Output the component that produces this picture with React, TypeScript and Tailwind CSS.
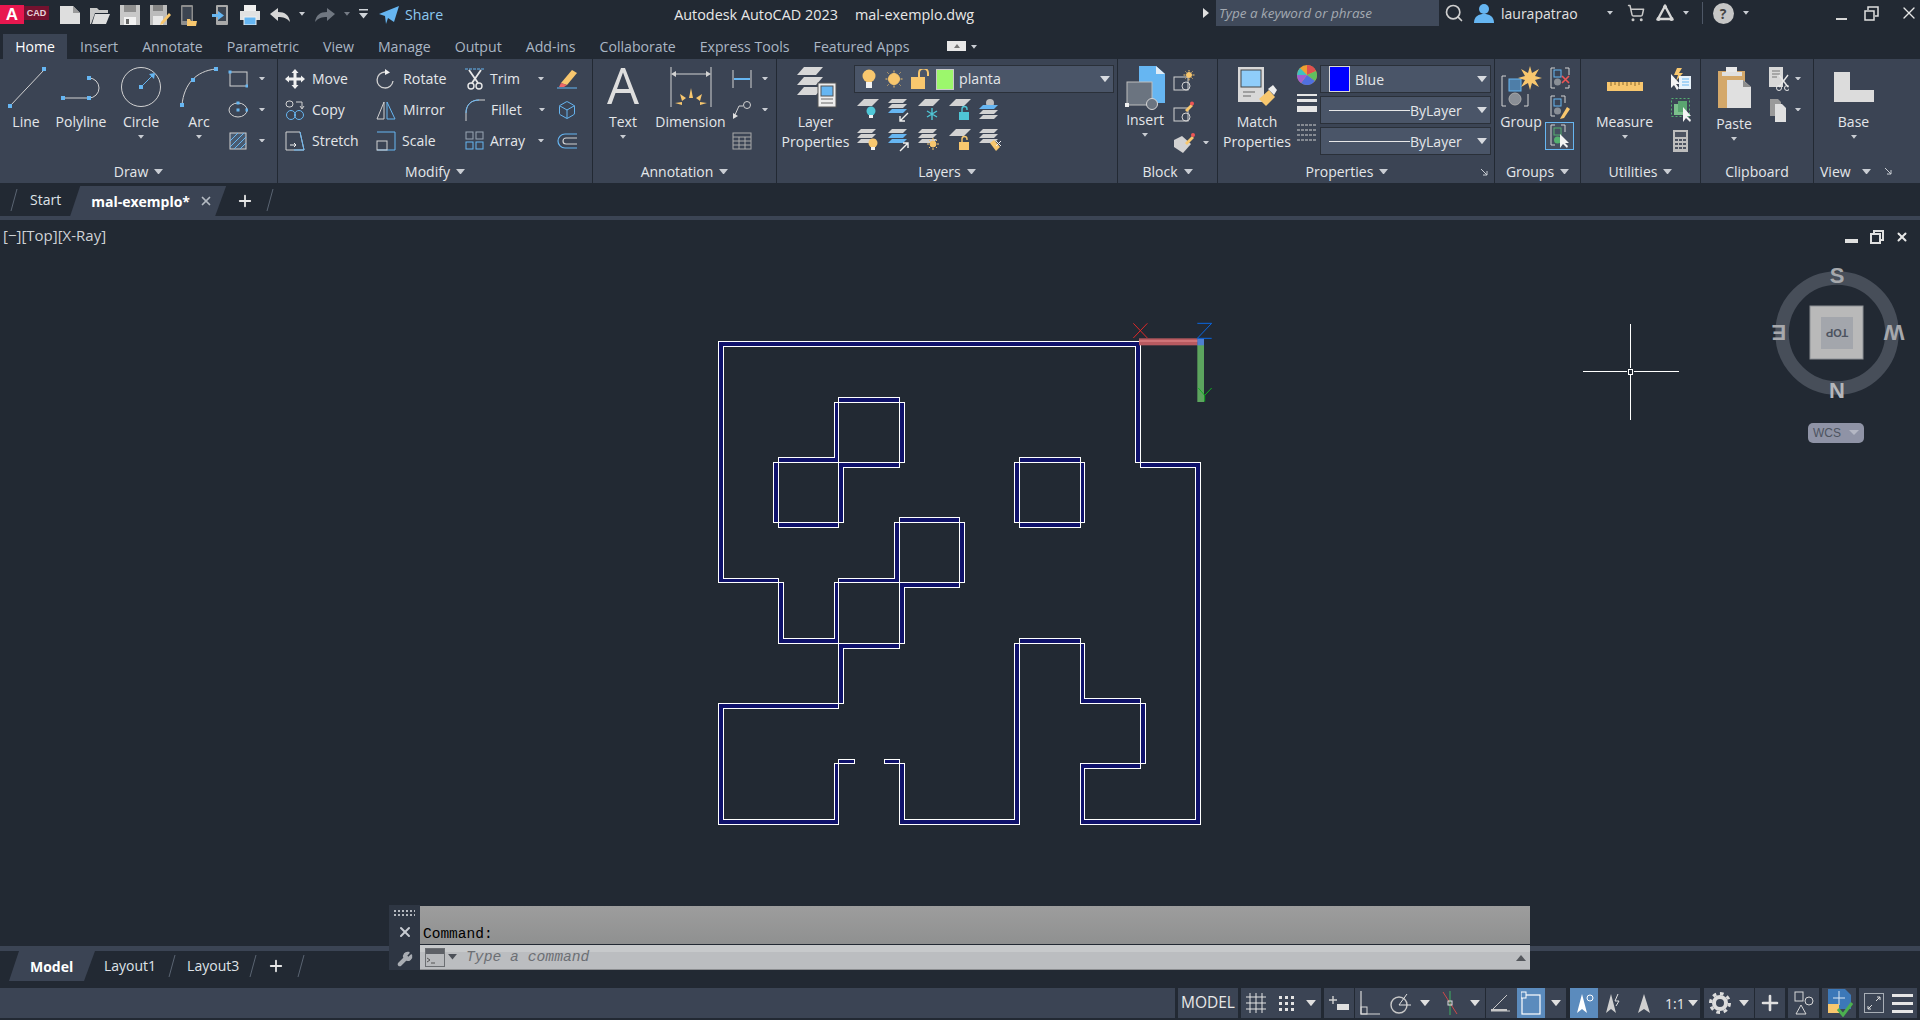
import type { ReactNode } from 'react';
import { Box, ShoppingCart, Search, Wrench, X, Plus } from 'lucide-react';

const G = '#d2d2d2';
const B = '#66b6f2';
const Y = '#f8c76e';

function Svg({ w, h, children, className = '' }: { w: number; h: number; children?: ReactNode; className?: string }) {
  return (
    <svg width={w} height={h} viewBox={`0 0 ${w} ${h}`} fill="none" className={`block shrink-0 ${className}`}>
      {children}
    </svg>
  );
}

function Caret({ className = '', size = 8, color = '#c9cdd3' }: { className?: string; size?: number; color?: string }) {
  return (
    <svg width={size} height={size * 0.62} viewBox="0 0 8 5" className={`block shrink-0 ${className}`}>
      <path d="M0 0H8L4 5Z" fill={color} />
    </svg>
  );
}

const Dot = ({ x, y, s = 4 }: { x: number; y: number; s?: number }) => (
  <rect x={x - s / 2} y={y - s / 2} width={s} height={s} fill={B} />
);

// sheet of a layer stack
const Sheet = ({ y, fill = G, h = 4 }: { y: number; fill?: string; h?: number }) => (
  <path d={`M${h} ${y}H${h + 15}L${15} ${y + h}H0Z`} fill={fill} />
);

const Bulb = ({ x, y, c = Y }: { x: number; y: number; c?: string }) => (
  <g>
    <circle cx={x} cy={y} r={4.5} fill={c} />
    <rect x={x - 2} y={y + 4} width={4} height={3} fill="#f2f2f2" />
  </g>
);

const Lock = ({ x, y, c = Y }: { x: number; y: number; c?: string }) => (
  <g>
    <rect x={x} y={y + 5} width={10} height={8} fill={c} />
    <path d={`M${x + 3} ${y + 5}V${y + 2}a2.5 2.5 0 0 1 5 0V${y + 3}`} stroke={c} strokeWidth={1.4} />
  </g>
);

const Sun = ({ x, y, r = 4 }: { x: number; y: number; r?: number }) => (
  <g stroke={Y} strokeWidth={1}>
    <circle cx={x} cy={y} r={r} fill={Y} />
    <path d={`M${x} ${y - r - 3}v2M${x} ${y + r + 1}v2M${x - r - 3} ${y}h2M${x + r + 1} ${y}h2M${x - r - 1} ${y - r - 1}l1 1M${x + r + 1} ${y - r - 1}l-1 1M${x - r - 1} ${y + r + 1}l1 -1M${x + r + 1} ${y + r + 1}l-1 -1`} />
  </g>
);

function BigTool({ w, icon, lines, caret, className = '', iconH = 46 }: { w: number; icon: ReactNode; lines: string[]; caret?: boolean; className?: string; iconH?: number }) {
  return (
    <div className={`flex flex-col items-center pt-[7px] shrink-0 ${className}`} style={{ width: w }}>
      <div className="flex justify-center" style={{ height: iconH }}>{icon}</div>
      {lines.map((l) => (
        <div key={l} className="leading-[20px] whitespace-nowrap">{l}</div>
      ))}
      {caret && <Caret size={6} className="mt-[3px]" />}
    </div>
  );
}

function Row({ children, className = '' }: { children?: ReactNode; className?: string }) {
  return <div className={`h-[31px] flex items-center ${className}`}>{children}</div>;
}

function Col({ children, className = '' }: { children?: ReactNode; className?: string }) {
  return <div className={`pt-[4px] shrink-0 ${className}`}>{children}</div>;
}

function Panel({ w, label, caret = true, launcher, labelClass = '', children }: { w: number; label: string; caret?: boolean; launcher?: boolean; labelClass?: string; children?: ReactNode }) {
  return (
    <div className="relative flex flex-col shrink-0 h-full border-r border-[#222933]" style={{ width: w }}>
      <div className="flex h-[101px]">{children}</div>
      <div className={`flex h-[23px] items-center justify-center gap-[6px] ${labelClass}`}>
        <span>{label}</span>
        {caret && <Caret size={9} />}
      </div>
      {launcher && (
        <svg width="7" height="7" viewBox="0 0 7 7" className="absolute right-[6px] bottom-[7px]">
          <path d="M0 0L6 6M6 2V6H2" stroke="#c9cdd3" strokeWidth="1" fill="none" />
        </svg>
      )}
    </div>
  );
}

function Dropdown({ w, children }: { w: number; children?: ReactNode }) {
  return (
    <div className="h-[28px] bg-[#4a5568] border border-[#2a3039] flex items-center relative" style={{ width: w }}>
      {children}
      <Caret size={10} color="#d8dbe0" className="absolute right-[3px] top-[10px]" />
    </div>
  );
}

function Slash({ className = '' }: { className?: string }) {
  return (
    <svg width="8" height="24" viewBox="0 0 8 24" className={`block shrink-0 ${className}`}>
      <path d="M7 1L1 23" stroke="#5a6472" strokeWidth="1" />
    </svg>
  );
}

function TitleBar() {
  return (
    <div className="h-[34px] flex items-center shrink-0 relative">
      <div className="flex items-start h-[20px] w-[49px] self-start mt-[5px]">
        <div className="w-[24px] h-[19px] bg-[#e8174f] text-white font-bold text-[17px] leading-[19px] text-center font-['Liberation_Sans']">A</div>
        <div className="w-[25px] h-[14px] mt-[1px] bg-[#74122f] text-[#e8d5da] font-bold text-[9px] leading-[14px] text-center font-['Liberation_Sans']">CAD</div>
      </div>
      <Svg w={20} h={18} className="ml-[11px] -mt-[5px]"><path d="M0 0H13L20 7V18H0Z" fill="#dedede" /><path d="M13 0V7H20" fill="#9a9a9a" /></Svg>
      <Svg w={20} h={18} className="ml-[10px] -mt-[5px]"><path d="M0 2H7L9 4H18V7H5L1 18H0Z" fill="#c9c9c9" /><path d="M5 8H20L16 18H2Z" fill="#dedede" /></Svg>
      <Svg w={20} h={20} className="ml-[10px] -mt-[5px]"><rect width="20" height="20" fill="#c8c8c8" /><rect x="4" width="12" height="7" fill="#8f8f8f" /><rect x="4" y="12" width="12" height="8" fill="#f2f2f2" /><rect x="6" y="14" width="3" height="5" fill="#666" /></Svg>
      <Svg w={21} h={20} className="ml-[10px] -mt-[5px]"><rect width="17" height="20" fill="#bcbcbc" /><rect x="3" width="10" height="6" fill="#858585" /><rect x="3" y="11" width="10" height="9" fill="#e8e8e8" /><path d="M11 17L19 8L21 10L13 19L10 20Z" fill={Y} /></Svg>
      <Svg w={16} h={21} className="ml-[10px] -mt-[4px]"><rect x="0" y="0" width="12" height="20" rx="1" fill="#8d8d8d" /><rect x="1.5" y="2" width="9" height="14" fill="#3d4551" /><path d="M6 14H9L10 16H16L15 21H6Z" fill={Y} /></Svg>
      <Svg w={16} h={21} className="ml-[15px] -mt-[4px]"><rect x="4" y="0" width="12" height="20" rx="1" fill="#a9a9a9" /><rect x="6" y="2" width="8" height="14" fill="#3d4551" /><path d="M0 9H6V6L12 10.5L6 15V12H0Z" fill={B} /></Svg>
      <Svg w={20} h={20} className="ml-[12px] -mt-[4px]"><rect x="4" width="12" height="6" fill="#f0f0f0" /><rect y="6" width="20" height="9" fill="#e2e2e2" /><rect x="4" y="12" width="12" height="8" fill={B} stroke="#f0f0f0" /></Svg>
      <Svg w={20} h={14} className="ml-[10px] -mt-[4px]"><path d="M0 6L8 0V4C15 4 19 7 20 14C17 10 13 9 8 9V13Z" fill="#d6d6d6" /></Svg>
      <Caret size={6} className="ml-[9px] -mt-[6px]" />
      <Svg w={20} h={14} className="ml-[10px] -mt-[4px]"><path d="M20 6L12 0V4C5 4 1 7 0 14C3 10 7 9 12 9V13Z" fill="#707781" /></Svg>
      <Caret size={6} className="ml-[9px] -mt-[6px]" color="#767c86" />
      <Svg w={9} h={10} className="ml-[9px] -mt-[6px]"><path d="M0 0H9V1.5H0ZM0 4H9L4.5 9.5Z" fill="#cfd3d8" /></Svg>
      <Svg w={20} h={18} className="ml-[11px] -mt-[4px]"><path d="M0 8L20 0L15 16L9 12L7 18L6 10Z" fill={B} /></Svg>
      <span className="ml-[6px] -mt-[5px] text-[#8cc8f0] text-[14.2px]">Share</span>
      <span className="ml-[231px] -mt-[5px] text-[#e8e8e8] whitespace-nowrap text-[14.4px]">Autodesk AutoCAD 2023</span>
      <span className="ml-[17px] -mt-[5px] text-[#e8e8e8] whitespace-nowrap text-[14.4px]">mal-exemplo.dwg</span>

      <div className="ml-auto flex items-center w-[717px] self-start h-[26px]">
        <Svg w={6} h={10} className="ml-[0px]"><path d="M0 0L6 5L0 10Z" fill="#e0e0e0" /></Svg>
        <div className="ml-[7px] w-[223px] h-[26px] bg-[#404a5b] flex items-center pl-[3px] italic text-[13.5px] text-[#a3a9b1]">Type a keyword or phrase</div>
        <Search size={20} color="#cfcfcf" className="ml-[5px] shrink-0" />
        <Svg w={20} h={20} className="ml-[10px]"><circle cx="10" cy="6" r="5" fill={B} /><path d="M0 20C0 13 5 11 10 11S20 13 20 20Z" fill={B} /></Svg>
        <span className="ml-[7px] text-[#e2e2e2]">laurapatrao</span>
        <Caret size={6} className="ml-[29px]" />
        <ShoppingCart size={18} color="#c9c9c9" className="ml-[14px] shrink-0" />
        <Svg w={18} h={18} className="ml-[11px]"><path d="M9 2L2 15H16Z" stroke="#d6d6d6" strokeWidth="2.4" /><circle cx="9" cy="3" r="2" fill="#d6d6d6" /><circle cx="2.5" cy="15" r="2" fill="#d6d6d6" /><circle cx="15.5" cy="15" r="2" fill="#d6d6d6" /></Svg>
        <Caret size={6} className="ml-[9px]" />
        <div className="ml-[13px] w-[1px] h-[22px] bg-[#4e5766]" />
        <div className="ml-[10px] w-[21px] h-[21px] rounded-full bg-[#c6c6c6] text-[#444] font-bold text-[14px] leading-[21px] text-center">?</div>
        <Caret size={6} className="ml-[9px]" />
        <div className="ml-[87px] w-[11px] h-[2.5px] mt-[12px] bg-[#d6d6d6]" />
        <Svg w={15} h={15} className="ml-[17px]"><path d="M4 4V1H14V10H11M1 5H10V14H1Z" stroke="#e0e0e0" strokeWidth="1.5" /></Svg>
        <X size={20} color="#e6e6e6" className="ml-[20px] shrink-0" strokeWidth={1.6} />
      </div>
    </div>
  );
}

function MenuTabs() {
  const tabs = ['Insert', 'Annotate', 'Parametric', 'View', 'Manage', 'Output', 'Add-ins', 'Collaborate', 'Express Tools', 'Featured Apps'];
  return (
    <div className="h-[25px] flex shrink-0 items-stretch">
      <div className="ml-[3px] w-[64px] bg-[#3b4454] text-white text-center leading-[25px]">Home</div>
      <div className="flex ml-[1px] text-[#aab6c4] text-[14.15px]">
        {tabs.map((t) => (
          <div key={t} className="px-[12px] leading-[25px] whitespace-nowrap">{t}</div>
        ))}
      </div>
      <div className="ml-[26px] mt-[7px] w-[19px] h-[10px] bg-[#e8e8e8] flex items-center justify-center">
        <svg width="6" height="4" viewBox="0 0 6 4"><path d="M3 0L6 4H0Z" fill="#777" /></svg>
      </div>
      <Caret size={6} className="ml-[5px] mt-[11px]" />
    </div>
  );
}

function Ribbon() {
  return (
    <div className="h-[124px] bg-[#3b4454] flex shrink-0 text-[#e4e7ea]">
      <Panel w={278} label="Draw">
        <BigTool w={52} lines={['Line']} icon={
          <Svg w={40} h={42}><path d="M4 40L38 4" stroke={G} /><Dot x={4} y={40} s={4} /><Dot x={38} y={3} s={4} /></Svg>} />
        <BigTool w={58} lines={['Polyline']} icon={
          <Svg w={40} h={42}><path d="M2 32H28A10 10 0 0 0 28 12" stroke={G} /><Dot x={2} y={32} /><Dot x={28} y={32} /><Dot x={28} y={12} /></Svg>} />
        <BigTool w={62} caret lines={['Circle']} icon={
          <Svg w={42} h={42}><circle cx="21" cy="21" r="19.5" stroke={G} /><path d="M21 21L32 10" stroke={B} /><path d="M29 8L35 7L34 13Z" fill={B} /><Dot x={21} y={21} /></Svg>} />
        <BigTool w={54} caret lines={['Arc']} icon={
          <Svg w={38} h={42}><path d="M2 39C4 18 16 5 36 3" stroke={G} /><Dot x={2} y={39} /><Dot x={13} y={14} /><Dot x={36} y={3} /></Svg>} />
        <Col className="pl-[2px]">
          <Row><Svg w={20} h={18}><rect x="2" y="2" width="17" height="14" stroke={G} /><Dot x={2} y={2} s={3} /><Dot x={19} y={16} s={3} /></Svg><Caret size={6} className="ml-[11px]" /></Row>
          <Row><Svg w={20} h={18}><ellipse cx="10" cy="9" rx="9" ry="7" stroke={G} /><Dot x={10} y={9} s={3} /><Dot x={19} y={9} s={3} /><Dot x={10} y={2} s={3} /></Svg><Caret size={6} className="ml-[11px]" /></Row>
          <Row><Svg w={20} h={20}><rect x="2" y="2" width="16" height="16" fill="#4a5b70" stroke={G} /><path d="M2 10L10 2M2 16L16 2M6 18L18 6M12 18L18 12" stroke={B} /></Svg><Caret size={6} className="ml-[11px]" /></Row>
        </Col>
      </Panel>

      <Panel w={315} label="Modify">
        <Col className="w-[95px] pl-[7px]">
          <Row><Svg w={20} h={20}><path d="M10 0L13.5 4H11.5V8.5H16V6.5L20 10L16 13.5V11.5H11.5V16H13.5L10 20L6.5 16H8.5V11.5H4V13.5L0 10L4 6.5V8.5H8.5V4H6.5Z" fill="#f0f0f0" /></Svg><span className="ml-[7px]">Move</span></Row>
          <Row><Svg w={20} h={20}><rect x="1" y="1" width="7" height="6" stroke={G} rx="3" /><path d="M11 2H17V8M15 6L17 9L19 6" stroke={G} /><circle cx="6" cy="15" r="4.5" stroke={B} /><circle cx="14" cy="15" r="4.5" stroke={B} /></Svg><span className="ml-[7px]">Copy</span></Row>
          <Row><Svg w={20} h={20}><path d="M1 1H15L19 19H1Z" stroke={G} /><path d="M15 1L19 19H9" stroke={B} /><path d="M5 14H11M9 12L11 14L9 16" stroke="#f0f0f0" /></Svg><span className="ml-[7px]">Stretch</span></Row>
        </Col>
        <Col className="w-[89px] pl-[3px]">
          <Row><Svg w={20} h={20}><path d="M9 3A8 8 0 1 0 17 12" stroke={G} strokeWidth="1.3" /><path d="M9 0L14 3.5L9 6Z" fill="#f0f0f0" /></Svg><span className="ml-[7px] text-[14.3px]">Rotate</span></Row>
          <Row><Svg w={20} h={20}><path d="M8 2L1 19H8Z" stroke={G} /><path d="M11 2L19 19H11Z" stroke={B} /></Svg><span className="ml-[7px]">Mirror</span></Row>
          <Row><Svg w={20} h={20}><path d="M1 1H19V19H1" stroke={B} /><rect x="1" y="10" width="10" height="9" stroke={G} /></Svg><span className="ml-[6px]">Scale</span></Row>
        </Col>
        <Col className="w-[93px] pl-[3px]">
          <Row><Svg w={20} h={22}><path d="M0 1H20" stroke={B} strokeDasharray="3 1" /><path d="M4 2L13 15M16 2L7 15" stroke="#e8e8e8" strokeWidth="1.8" /><circle cx="6" cy="18" r="3" stroke="#e8e8e8" strokeWidth="1.4" /><circle cx="14" cy="18" r="3" stroke="#e8e8e8" strokeWidth="1.4" /></Svg><span className="ml-[5px]">Trim</span><Caret size={6} className="ml-[18px]" /></Row>
          <Row><Svg w={20} h={22}><path d="M1 22V14C1 6 6 1 14 1H20" stroke={G} /><path d="M1 14C1 6 6 1 14 1" stroke={B} /></Svg><span className="ml-[6px]">Fillet</span><Caret size={6} className="ml-[17px]" /></Row>
          <Row><Svg w={20} h={20}><g stroke={B}><rect x="1" y="1" width="7" height="7" stroke="#9aa6b4" /><rect x="11" y="1" width="7" height="7" stroke="#9aa6b4" /><rect x="1" y="11" width="7" height="7" /><rect x="11" y="11" width="7" height="7" /></g></Svg><span className="ml-[5px]">Array</span><Caret size={6} className="ml-[13px]" /></Row>
        </Col>
        <Col className="pl-[2px]">
          <Row><Svg w={20} h={20}><path d="M4 14L15 1L20 4L10 16Z" fill={Y} /><path d="M4 14L10 16L7 18H2Z" fill="#e66" /><path d="M0 19H20" stroke={B} /></Svg></Row>
          <Row><Box size={20} color={B} className="shrink-0" strokeWidth={1.2} /></Row>
          <Row><Svg w={20} h={18}><path d="M20 2H8A7 7 0 0 0 8 16H20" stroke={B} strokeWidth="1.2" /><path d="M20 6H9A3 3 0 0 0 9 12H20" stroke={G} strokeWidth="1.2" /></Svg></Row>
        </Col>
      </Panel>

      <Panel w={184} label="Annotation">
        <BigTool w={60} caret lines={['Text']} icon={
          <Svg w={34} h={42}><path d="M1 38L15 2H19L33 38H28.5L24.5 27H9.5L5.5 38ZM11 23H23L17 6.5Z" fill="#dedede" /></Svg>} />
        <BigTool w={75} lines={['Dimension']} icon={
          <Svg w={42} h={42}><path d="M1 1V41M41 1V41" stroke={G} /><path d="M3 8H39" stroke={G} /><path d="M1 8L6 5V11ZM41 8L36 5V11Z" fill={G} /><g fill={Y}><path d="M21 22L23 32H19Z" /><path d="M10 28L16 32L12 35Z" /><path d="M32 28L26 32L30 35Z" /><path d="M5 37L12 36V39Z" /><path d="M37 37L30 36V39Z" /></g></Svg>} />
        <Col className="pl-[4px]">
          <Row><Svg w={20} h={18}><path d="M1 0V18M19 0V18" stroke={G} /><path d="M2 9H18" stroke={B} strokeWidth="2" /></Svg><Caret size={6} className="ml-[10px]" /></Row>
          <Row><Svg w={20} h={20}><circle cx="15" cy="5" r="3.5" stroke={G} /><path d="M11 6H7L2 17" stroke={G} /><path d="M1 19L1 13L6 16Z" fill="#e0e0e0" /></Svg><Caret size={6} className="ml-[10px]" /></Row>
          <Row><Svg w={20} h={18}><rect x="1" y="1" width="18" height="16" stroke="#a9a9a9" /><path d="M1 5H19M1 9H19M1 13H19M7 5V17M13 5V17" stroke="#a9a9a9" /></Svg></Row>
        </Col>
      </Panel>

      <Panel w={341} label="Layers">
        <BigTool w={77} iconH={46} lines={['Layer', 'Properties']} icon={
          <Svg w={42} h={42}><path d="M9 1H28L21 9H2Z" fill="#d8d8d8" /><path d="M9 11H28L21 19H2Z" fill="#d8d8d8" /><path d="M9 21H28L21 29H2Z" fill="#d8d8d8" /><rect x="23" y="17" width="18" height="24" fill="#ededed" stroke="#555" /><rect x="26" y="20" width="12" height="10" fill={B} stroke="#555" /><path d="M26 33H38M26 37H38" stroke="#666" /></Svg>} />
        <div className="pt-[6px]">
          <Dropdown w={260}>
            <Svg w={16} h={20} className="ml-[6px]"><circle cx="8" cy="7" r="6.5" fill={Y} /><rect x="5" y="13" width="6" height="6" fill="#f2f2f2" /></Svg>
            <Svg w={20} h={20} className="ml-[7px]"><Sun x={10} y={10} r={5.5} /></Svg>
            <Svg w={20} h={20} className="ml-[6px]"><rect x="1" y="8" width="14" height="12" fill={Y} /><path d="M9 8V4A4 4 0 0 1 18 4V7" stroke={Y} strokeWidth="2" /></Svg>
            <div className="ml-[6px] w-[18px] h-[21px] bg-[#9cf76c] border border-[#c9c9c9]" />
            <span className="ml-[5px] text-[14.2px]">planta</span>
          </Dropdown>
          <div className="flex flex-col gap-[7px] mt-[6px] pl-[3px]">
            <div className="flex gap-[8.5px]">
              <Svg w={22} h={23}><Sheet y={0} h={7} /><Bulb x={14} y={12} c="#4fc6d6" /></Svg>
              <Svg w={22} h={23}><Sheet y={0} /><Sheet y={5} /><Sheet y={10} fill={B} /><path d="M12 22L20 14M12 17V22H17" stroke="#f0f0f0" strokeWidth="1.4" /></Svg>
              <Svg w={22} h={23}><Sheet y={0} h={7} /><path d="M14 9V21M9 12L19 18M19 12L9 18" stroke="#4fc6d6" strokeWidth="1.4" /></Svg>
              <Svg w={22} h={23}><Sheet y={0} h={7} /><Lock x={10} y={8} c="#4fc6d6" /></Svg>
              <Svg w={22} h={23}><circle cx="11" cy="4" r="4" fill="#bdbdbd" /><Sheet y={6} fill={B} /><Sheet y={11} /><Sheet y={16} /></Svg>
            </div>
            <div className="flex gap-[8.5px]">
              <Svg w={22} h={23}><Sheet y={0} /><Sheet y={5} /><Sheet y={10} /><Bulb x={16} y={14} /></Svg>
              <Svg w={22} h={23}><Sheet y={0} /><Sheet y={5} fill={B} /><Sheet y={10} fill={B} /><path d="M12 22L20 14M15 14H20V19" stroke="#f0f0f0" strokeWidth="1.4" /></Svg>
              <Svg w={22} h={23}><Sheet y={0} /><Sheet y={5} /><Sheet y={10} /><Sun x={15} y={15} r={3} /></Svg>
              <Svg w={22} h={23}><Sheet y={0} h={7} /><Lock x={10} y={8} /></Svg>
              <Svg w={22} h={23}><Sheet y={0} /><Sheet y={5} /><Sheet y={10} /><path d="M11 14L15 11L21 18L17 22Z" fill={Y} /><path d="M17 12L22 17M22 12L17 17" stroke="#f0f0f0" /></Svg>
            </div>
          </div>
        </div>
      </Panel>

      <Panel w={100} label="Block">
        <BigTool w={54} iconH={44} caret lines={['Insert']} icon={
          <Svg w={40} h={44}><path d="M14 0H31L40 8V37H14Z" fill={B} /><path d="M31 0V8H40Z" fill="#e2ecf5" /><rect x="2" y="16" width="25" height="23" fill="#6b7480" stroke="#bdbdbd" /><circle cx="27" cy="38" r="5.5" stroke="#d6d6d6" fill="#6b7480" /><rect y="37" width="4" height="4" fill="#f0f0f0" /></Svg>} />
        <Col className="pl-[1px] pt-[6px]">
          <Row className="h-[30px]"><Svg w={22} h={22}><rect x="1" y="7" width="14" height="13" stroke={G} /><circle cx="13" cy="16" r="4" stroke={G} /><Sun x={16} y={5} r={2.5} /></Svg></Row>
          <Row className="h-[30px]"><Svg w={22} h={22}><rect x="1" y="7" width="14" height="13" stroke={G} /><circle cx="13" cy="16" r="4" stroke={G} /><path d="M12 9L18 3L20 5L14 11Z" fill={Y} /><circle cx="19" cy="2.5" r="2" fill="#e55" /></Svg></Row>
          <Row className="h-[30px]"><Svg w={22} h={22}><path d="M1 8L9 4L18 12L10 21L1 15Z" fill={G} /><path d="M12 11L19 4L21 6L14 13Z" fill={Y} /><circle cx="20" cy="3" r="2" fill="#e55" /></Svg><Caret size={6} className="ml-[8px]" /></Row>
        </Col>
      </Panel>

      <Panel w={277} label="Properties" launcher labelClass="pr-[18px]">
        <BigTool w={78} lines={['Match', 'Properties']} icon={
          <Svg w={40} h={44}><rect x="1" y="1" width="26" height="35" fill="#d8d8d8" /><rect x="4" y="4" width="20" height="17" fill="#8fcdfa" stroke="#444" /><path d="M6 26H18M6 30H14" stroke="#666" /><path d="M22 33L32 24L38 31L29 40Z" fill={Y} /><path d="M31 23L36 19L40 24L37 29Z" fill="#ededed" /></Svg>} />
        <div className="pt-[6px] pl-[1px] w-[24px] flex flex-col gap-[9px]">
          <Svg w={20} h={20}><circle cx="10" cy="10" r="10" fill="#f0a030" /><path d="M10 10L10 0A10 10 0 0 1 19 6Z" fill="#e05050" /><path d="M10 10L19 6A10 10 0 0 1 18 16Z" fill="#60c060" /><path d="M10 10L18 16A10 10 0 0 1 4 18Z" fill="#5070e0" /><path d="M10 10L4 18A10 10 0 0 1 0 10Z" fill="#a060d0" /><path d="M10 10L0 10A10 10 0 0 1 3 3Z" fill="#40c0c0" /></Svg>
          <Svg w={20} h={21}><rect y="0" width="20" height="2" fill="#e6e6e6" /><rect y="5" width="20" height="3" fill="#e6e6e6" /><rect y="12" width="20" height="6" fill="#e6e6e6" /></Svg>
          <Svg w={20} h={20}><path d="M0 1H20M0 6H20M0 11H20M0 16H20" stroke="#d0d0d0" strokeDasharray="3 1" /></Svg>
        </div>
        <div className="pt-[6px] flex flex-col gap-[3px]">
          <Dropdown w={171}>
            <div className="ml-[8px] w-[21px] h-[26px] bg-[#0000ff] border border-[#d8d8d8]" />
            <span className="ml-[5px]">Blue</span>
          </Dropdown>
          <Dropdown w={171}>
            <div className="ml-[8px] w-[81px] h-[1px] bg-[#e8e8e8]" />
            <span>ByLayer</span>
          </Dropdown>
          <Dropdown w={171}>
            <div className="ml-[8px] w-[81px] h-[1px] bg-[#e8e8e8]" />
            <span>ByLayer</span>
          </Dropdown>
        </div>
      </Panel>

      <Panel w={86} label="Groups">
        <BigTool w={52} lines={['Group']} icon={
          <Svg w={42} h={42}><path d="M6 10H2V40H6M28 28V40H24" stroke={G} /><rect x="9" y="13" width="12" height="12" fill="#4e7ea8" stroke={B} /><circle cx="15" cy="33" r="6" fill="#8a8f96" stroke="#aaa" /><path d="M30 0L32 7L39 3L35 10L42 12L35 14L39 21L32 17L30 24L28 17L21 21L25 14L18 12L25 10L21 3L28 7Z" fill={Y} /></Svg>} />
        <Col className="pt-[3px]">
          <div className="h-[29px] flex items-center pl-[3px]"><Svg w={20} h={22}><path d="M5 1H1V21H5M15 1H19V8M19 18V21H15" stroke={G} /><rect x="4" y="3" width="7" height="7" stroke={B} /><circle cx="7.5" cy="15" r="3.5" fill="#8a8f96" /><path d="M12 9L19 16M19 9L12 16" stroke="#e55" strokeWidth="1.6" /></Svg></div>
          <div className="h-[30px] flex items-center pl-[3px]"><Svg w={20} h={24}><path d="M5 1H1V21H5M11 1H15V8" stroke={G} /><rect x="4" y="4" width="7" height="7" stroke={B} /><circle cx="7.5" cy="16" r="3.5" fill="#8a8f96" /><path d="M11 22L17 12L20 14L14 23L10 24Z" fill={Y} /></Svg></div>
          <div className="w-[29px] h-[28px] border border-[#66b6f2] bg-[#454f60] flex items-center justify-center -ml-[2px]"><Svg w={20} h={24}><path d="M5 1H1V21H5M11 1H15V8" stroke={G} /><rect x="4" y="4" width="7" height="7" stroke="#54b070" /><circle cx="7.5" cy="16" r="3.5" fill="#54b070" /><path d="M10 10V24L13 20L17 24L18 22L15 19H19Z" fill="#f4f4f4" /></Svg></div>
        </Col>
      </Panel>

      <Panel w={120} label="Utilities">
        <BigTool w={87} caret iconH={46} lines={['Measure']} icon={
          <Svg w={38} h={42}><rect x="1" y="16" width="36" height="9" fill={Y} /><path d="M5 16V20M9 16V19M13 16V20M17 16V19M21 16V20M25 16V19M29 16V20M33 16V19" stroke="#8b6a2e" /></Svg>} />
        <Col className="pl-[3px]">
          <Row><Svg w={20} h={22}><path d="M6 0H11L8 5H12L5 13L7 7H3Z" fill={Y} /><rect x="8" y="8" width="12" height="13" fill="#e8f2fa" /><path d="M11 11H18M11 14H18M11 17H18" stroke={B} /><path d="M0 6V20L3 17L6 22L8 20L5 16H9Z" fill="#f4f4f4" /></Svg></Row>
          <Row><Svg w={20} h={24}><rect x="0.5" y="0.5" width="18" height="18" stroke="#54b070" strokeDasharray="2 2" /><rect x="3" y="6" width="10" height="11" fill="#7cc08c" /><rect x="7" y="3" width="9" height="11" fill="#5aa570" /><path d="M12 9V24L15 20L19 24L20 22L16 18H20Z" fill="#f4f4f4" /></Svg></Row>
          <Row><Svg w={15} h={22} className="ml-[2px]"><rect width="15" height="22" fill="#bdbdbd" /><rect x="2" y="2" width="11" height="5" fill="#4b5260" /><g fill="#4b5260"><rect x="2" y="9" width="3" height="2" /><rect x="6" y="9" width="3" height="2" /><rect x="10" y="9" width="3" height="2" /><rect x="2" y="13" width="3" height="2" /><rect x="6" y="13" width="3" height="2" /><rect x="10" y="13" width="3" height="2" /><rect x="2" y="17" width="3" height="2" /><rect x="6" y="17" width="3" height="2" /><rect x="10" y="17" width="3" height="2" /></g></Svg></Row>
        </Col>
      </Panel>

      <Panel w={113} label="Clipboard" caret={false}>
        <BigTool w={66} caret iconH={48} lines={['Paste']} icon={
          <Svg w={33} h={42}><rect x="0" y="5" width="27" height="37" fill="#d4a86a" /><rect x="8" y="1" width="11" height="7" fill="#e8e8e8" /><rect x="4" y="6" width="20" height="4" fill="#e0e0e0" /><path d="M9 14H25L33 21V42H9Z" fill="#e0e0e0" /><path d="M25 14V21H33Z" fill="#8e8e8e" /></Svg>} />
        <Col>
          <Row className="pl-[2px]"><Svg w={20} h={24}><rect x="0" y="0" width="14" height="20" fill="#d8d8d8" /><path d="M3 4H11M3 7H11M3 10H8" stroke="#777" /><path d="M10 8L19 20M19 8L10 20" stroke="#e8e8e8" strokeWidth="1.4" /><circle cx="10" cy="21" r="2.5" stroke="#e8e8e8" /><circle cx="18" cy="21" r="2.5" stroke="#e8e8e8" /></Svg><Caret size={6} className="ml-[6px]" /></Row>
          <Row className="pl-[2px]"><Svg w={20} h={24}><path d="M1 1H9L12 4V18H1Z" fill="#9a9a9a" /><path d="M6 6H13L17 10V24H6Z" fill="#e0e0e0" /></Svg><Caret size={6} className="ml-[6px]" /></Row>
        </Col>
      </Panel>

      <div className="relative flex flex-col flex-1 h-full">
        <div className="flex h-[101px]">
          <BigTool w={79} iconH={46} caret lines={['Base']} icon={
            <Svg w={40} h={36} className="mt-[6px]"><path d="M0 0H16V18H40V30H0Z" fill="#dcdcdc" /></Svg>} />
        </div>
        <div className="flex h-[23px] items-center gap-[6px] pl-[6px]">
          <span>View</span>
          <Caret size={9} className="ml-[5px]" />
          <svg width="7" height="7" viewBox="0 0 7 7" className="ml-[8px]"><path d="M0 0L6 6M6 2V6H2" stroke="#c9cdd3" strokeWidth="1" fill="none" /></svg>
        </div>
      </div>
    </div>
  );
}

function FileTabs() {
  return (
    <div className="h-[33px] flex shrink-0 items-end relative text-[#dfe3e8]">
      <Slash className="ml-[10px] mb-[4px]" />
      <span className="ml-[12px] mb-[6px]">Start</span>
      <div className="ml-[9px] w-[156px] h-[30px] bg-[#3b4454] [clip-path:polygon(10px_0,100%_0,calc(100%-11px)_100%,0_100%)] flex items-center pl-[21px]">
        <span className="font-bold text-white whitespace-nowrap">mal-exemplo*</span>
        <X size={14} color="#b4bac2" strokeWidth={3} className="ml-[9px] shrink-0" />
      </div>
      <Plus size={18} color="#e6e6e6" strokeWidth={2.4} className="ml-[10px] mb-[6px] shrink-0" />
      <Slash className="ml-[12px] mb-[4px]" />
    </div>
  );
}

// wall outline of the drawing, traced in 3x coordinates
const WALLS =
  'M463 1330V1318H415V1513H55V1150H430V985H598V592H778V802H613V970H235V775H70V79H1307V427H1501V1513H1141V1330H1337V1150H1141V955H958V1513H598V1318H553V1330H613V1498H943V970H1153V1136H1322V1345H1153V1498H1487V441H1322V65H55V788H250V955H403V788H793V607H584V775H415V1165H70V1498H403V1330Z' +
  'M415 232H598V441H430V607H220V427H415Z M403 247H613V427H415V622H235V412H403Z' +
  'M958 412H1141V622H958Z M943 427H1153V607H943Z';

function Drawing() {
  return (
    <svg width="520" height="520" viewBox="0 0 1560 1560" className="absolute left-[700px] top-[100px]">
      <path d={WALLS} fill="#0f116b" fillRule="evenodd" stroke="#ffffff" strokeWidth="3" shapeRendering="crispEdges" />
      <rect x="1317" y="55" width="176" height="21" fill="#b85a60" />
      <rect x="1317" y="60" width="176" height="6" fill="#d07478" />
      <rect x="1492" y="75" width="20" height="171" fill="#5ca45e" />
      <rect x="1492" y="56" width="20" height="20" fill="#4f7fd0" />
      <path d="M1300 10L1342 54M1342 10L1300 54" stroke="#e02828" strokeWidth="3" />
      <path d="M1492 10H1535L1492 55H1535" stroke="#0a66e0" strokeWidth="3" fill="none" />
      <path d="M1495 204L1514 226L1535 204M1514 226V245" stroke="#10b020" strokeWidth="3" fill="none" />
    </svg>
  );
}

function ViewCube() {
  return (
    <svg width="160" height="250" viewBox="0 0 160 250" className="absolute left-[1760px] top-[40px]">
      <circle cx="77" cy="73" r="55" stroke="#474e59" strokeWidth="13.5" fill="none" />
      <rect x="50" y="46" width="53" height="53" fill="#b9b9b9" stroke="#8b8f94" />
      <rect x="61" y="57" width="32" height="32" fill="#a3a6ac" />
      <text x="0" y="0" transform="translate(77 73) rotate(180) translate(0 4)" textAnchor="middle" fontSize="11" fontWeight="700" fill="#4d5360" fontFamily="Liberation Sans">TOP</text>
      <text x="77" y="23" textAnchor="middle" fontSize="22" fontWeight="700" fill="#a6a8ac" fontFamily="Liberation Sans">S</text>
      <text x="77" y="138" textAnchor="middle" fontSize="22" fontWeight="700" fill="#b4b6ba" fontFamily="Liberation Sans">N</text>
      <text x="0" y="0" transform="translate(19 73) rotate(180) translate(0 8)" textAnchor="middle" fontSize="22" fontWeight="700" fill="#a6a8ac" fontFamily="Liberation Sans">E</text>
      <text x="0" y="0" transform="translate(134 73) rotate(180) translate(0 8)" textAnchor="middle" fontSize="22" fontWeight="700" fill="#a6a8ac" fontFamily="Liberation Sans">W</text>
      <rect x="48" y="163" width="56" height="20" rx="5" fill="#8f93a6" />
      <text x="53" y="177" fontSize="12" fill="#4d5360" fontFamily="Liberation Sans">WCS</text>
      <path d="M89 170H99L94 175Z" fill="#b4b7c4" />
    </svg>
  );
}

function Viewport() {
  return (
    <div className="flex-1 relative min-h-0">
      <span className="absolute left-[3px] top-[5px] text-[#cfd2d6] text-[15px] leading-[20px]">[−][Top][X-Ray]</span>
      <div className="absolute right-[11px] top-[10px] flex items-start">
        <div className="w-[13px] h-[4px] bg-[#e0e0e0] mt-[9px]" />
        <Svg w={14} h={14} className="ml-[12px]"><path d="M4 3V1H13V10H11M1 4H10V13H1Z" stroke="#e0e0e0" strokeWidth="2" /></Svg>
        <X size={14} color="#e8e8e8" strokeWidth={3.4} className="ml-[11px]" />
      </div>
      <Drawing />
      <ViewCube />
      <svg width="100" height="100" viewBox="0 0 100 100" className="absolute left-[1582px] top-[103px]">
        <path d="M1 48.5H45M52 48.5H97M48.5 1V45M48.5 52V97" stroke="#fff" strokeWidth="1" />
        <rect x="46.5" y="46.5" width="4" height="5" stroke="#fff" strokeWidth="1" fill="none" />
      </svg>
    </div>
  );
}

function CommandLine() {
  return (
    <div className="absolute left-[389px] top-[905px] flex h-[65px] w-[1141px] font-['Liberation_Mono']">
      <div className="w-[31px] bg-[#2e3643] flex flex-col items-center pt-[5px]">
        <Svg w={21} h={6}><path d="M0 1H21M0 5H21" stroke="#b4b8be" strokeWidth="2" strokeDasharray="2 2" /></Svg>
        <X size={16} color="#c8ccd2" strokeWidth={3} className="mt-[8px]" />
        <Wrench size={16} color="#a9adb3" fill="#a9adb3" className="mt-[11px]" />
      </div>
      <div className="flex-1 flex flex-col">
        <div className="h-[38px] mt-[1px] bg-[linear-gradient(#9d9d9d,#8f9090)] flex items-end pl-[3px] text-[14.5px] leading-[20px] text-black">Command:</div>
        <div className="h-[25px] mt-[1px] bg-[linear-gradient(#c7c9cb_30%,#bbbdc0_30%)] border-b border-[#8c8e91] flex items-center relative">
          <Svg w={20} h={19} className="ml-[5px]"><rect x="0.5" y="0.5" width="19" height="18" fill="#b8babd" stroke="#6b6e72" /><rect x="1" y="1" width="18" height="5" fill="#5d6066" /><path d="M2 10L5 12L2 14M6 15H10" stroke="#555" /></Svg>
          <Caret size={9} color="#4c5058" className="ml-[3px]" />
          <span className="ml-[9px] italic text-[14.7px] text-[#6c6f74]">Type a command</span>
          <svg width="10" height="6" viewBox="0 0 10 6" className="absolute right-[4px] top-[10px]"><path d="M5 0L10 6H0Z" fill="#55585d" /></svg>
        </div>
      </div>
    </div>
  );
}

function LayoutTabs() {
  return (
    <div className="h-[37px] shrink-0 flex items-start text-[#dfe3e8]">
      <div className="ml-[9px] w-[86px] h-[30px] bg-[#3b4454] [clip-path:polygon(10px_0,100%_0,calc(100%-11px)_100%,0_100%)] flex items-center pl-[21px] font-bold text-white">Model</div>
      <span className="ml-[9px] leading-[30px]">Layout1</span>
      <Slash className="ml-[12px] mt-[3px]" />
      <span className="ml-[11px] leading-[30px]">Layout3</span>
      <Slash className="ml-[10px] mt-[3px]" />
      <Plus size={18} color="#e6e6e6" strokeWidth={2.4} className="ml-[10px] mt-[6px] shrink-0" />
      <Slash className="ml-[12px] mt-[3px]" />
    </div>
  );
}

function SGroup({ w, children, className = '' }: { w: number; children?: ReactNode; className?: string }) {
  return (
    <div className={`h-full bg-[#3b4454] flex items-center shrink-0 ${className}`} style={{ width: w }}>
      {children}
    </div>
  );
}

function StatusBar() {
  return (
    <div className="h-[30px] shrink-0 flex text-[#e8e8e8]">
      <div className="w-[1175px] h-full bg-[#3b4454]" />
      <SGroup w={60} className="ml-[3px] justify-center text-[15.5px]">MODEL</SGroup>
      <SGroup w={80} className="ml-[3px]">
        <Svg w={20} h={20} className="ml-[5px]"><path d="M0 4H20M0 10H20M0 16H20M4 0V20M10 0V20M16 0V20" stroke="#e4e4e4" /></Svg>
        <Svg w={16} h={16} className="ml-[12px]"><g fill="#e4e4e4"><rect x="1" y="1" width="3" height="3" /><rect x="7" y="1" width="3" height="3" /><rect x="13" y="1" width="3" height="3" /><rect x="1" y="7" width="3" height="3" /><rect x="7" y="7" width="3" height="3" /><rect x="13" y="7" width="3" height="3" /><rect x="1" y="13" width="3" height="3" /><rect x="7" y="13" width="3" height="3" /><rect x="13" y="13" width="3" height="3" /></g></Svg>
        <Caret size={10} color="#e0e0e0" className="ml-[12px]" />
      </SGroup>
      <SGroup w={30} className="ml-[3px] justify-center">
        <Svg w={22} h={20}><path d="M5 3V11M1 7H9" stroke="#d0d0d0" strokeWidth="1.4" /><rect x="9" y="11" width="12" height="6" fill="#e0e0e0" /></Svg>
      </SGroup>
      <SGroup w={130} className="ml-[1px]">
        <Svg w={20} h={24} className="ml-[5px]"><path d="M1 0V23H20" stroke="#d8d8d8" strokeWidth="1.2" /><rect x="1" y="16" width="6" height="7" stroke="#d8d8d8" /></Svg>
        <Svg w={21} h={21} className="ml-[10px]"><circle cx="9" cy="12" r="8" stroke="#c8c8c8" strokeWidth="1.4" /><path d="M9 12L17 1M9 12H21" stroke="#e0e0e0" /></Svg>
        <Caret size={10} color="#e0e0e0" className="ml-[9px]" />
        <Svg w={16} h={24} className="ml-[12px]"><path d="M1 1L15 23" stroke="#d04848" /><path d="M8 0V24" stroke="#3fb060" /><rect x="6" y="10" width="4" height="4" stroke="#e0e0e0" /></Svg>
        <Caret size={10} color="#e0e0e0" className="ml-[12px]" />
      </SGroup>
      <SGroup w={80} className="ml-[1px]">
        <Svg w={20} h={20} className="ml-[5px]"><path d="M0 18H19M2 16L16 2" stroke="#c8c8c8" /><path d="M0 17H16" stroke="#c8c8c8" strokeWidth="2" /></Svg>
        <div className="ml-[6px] w-[28px] h-full bg-[#5b8bbd] flex items-center justify-center">
          <Svg w={20} h={24}><rect x="1" y="4" width="18" height="19" stroke="#fff" strokeWidth="1.2" /><rect x="0" y="1" width="5" height="6" fill="#5b8bbd" stroke="#fff" /></Svg>
        </div>
        <Caret size={10} color="#e0e0e0" className="ml-[6px]" />
      </SGroup>
      <SGroup w={130} className="ml-[4px]">
        <div className="w-[28px] h-full bg-[#5b8bbd] flex items-center justify-center">
          <Svg w={20} h={24}><path d="M8 3L13 22L8 18L3 22Z" fill="#fff" /><circle cx="16" cy="7" r="3" stroke="#fff" /></Svg>
        </div>
        <Svg w={20} h={24} className="ml-[5px]"><path d="M8 3L13 22L8 18L3 22Z" fill="#d0d0d0" /><path d="M15 3L12 10H16L13 15" stroke="#e0e0e0" /></Svg>
        <Svg w={18} h={24} className="ml-[12px]"><path d="M9 3L15 22L9 18L3 22Z" fill="#d0d0d0" /></Svg>
        <span className="ml-[12px] text-[14px]">1:1</span>
        <Caret size={10} color="#e0e0e0" className="ml-[3px]" />
      </SGroup>
      <SGroup w={50} className="ml-[4px]">
        <Svg w={22} h={22} className="ml-[5px]"><circle cx="11" cy="11" r="9.5" stroke="#dcdcdc" strokeWidth="3" strokeDasharray="3.7 3.7" /><circle cx="11" cy="11" r="6" stroke="#dcdcdc" strokeWidth="4" /></Svg>
        <Caret size={10} color="#e0e0e0" className="ml-[8px]" />
      </SGroup>
      <SGroup w={30} className="ml-[1px] justify-center">
        <Plus size={24} color="#e0e0e0" strokeWidth={2.6} />
      </SGroup>
      <SGroup w={31} className="ml-[3px] justify-center">
        <Svg w={20} h={24}><rect x="1" y="1" width="8" height="9" stroke="#d8d8d8" /><circle cx="15" cy="10" r="4" stroke="#d8d8d8" /><path d="M2 23L7 14L12 23Z" stroke="#d8d8d8" /></Svg>
      </SGroup>
      <SGroup w={34} className="ml-[3px] justify-center">
        <Svg w={28} h={28}><path d="M3 0H20L26 6V20H3Z" fill="#3c78b8" /><path d="M14 2V16M8 9H20" stroke="#dce8f4" /><rect x="3" y="15" width="11" height="9" fill={Y} /><path d="M13 20L18 26L27 14" stroke="#4cb050" strokeWidth="3" /></Svg>
      </SGroup>
      <SGroup w={58} className="ml-[3px] justify-center gap-[8px]">
        <Svg w={20} h={20}><rect x="0.5" y="0.5" width="19" height="19" stroke="#a8aeb6" /><path d="M12 8L16 4M13 4H16V7M8 12L4 16M4 13V16H7" stroke="#e0e0e0" /></Svg>
        <Svg w={21} h={20}><rect width="21" height="3" y="1" fill="#e6e6e6" /><rect width="21" height="3" y="9" fill="#e6e6e6" /><rect width="21" height="3" y="17" fill="#e6e6e6" /></Svg>
      </SGroup>
    </div>
  );
}

export default function App() {
  return (
    <div className="relative w-[1920px] h-[1020px] overflow-hidden bg-[#222933] flex flex-col font-['Open_Sans',sans-serif] text-[14px] text-[#e4e7ea]">
      <TitleBar />
      <MenuTabs />
      <Ribbon />
      <FileTabs />
      <div className="h-[4px] bg-[#3b4454] shrink-0" />
      <Viewport />
      <div className="h-[5px] bg-[#3b4454] shrink-0" />
      <LayoutTabs />
      <StatusBar />
      <div className="h-[2px] shrink-0" />
      <CommandLine />
    </div>
  );
}
